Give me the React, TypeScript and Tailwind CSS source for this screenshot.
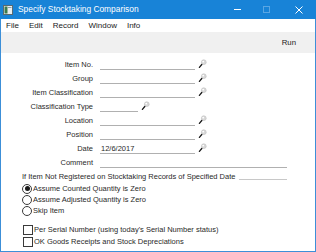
import React from 'react';

const font = { fontFamily: '"Liberation Sans", Arial, sans-serif' };

const Lookup: React.FC = () => (
  <svg width="9" height="10" viewBox="0 0 9 10" className="ml-[3px] -mt-[3px] shrink-0">
    <circle cx="5.8" cy="3.2" r="2.4" fill="#d8d8d8" stroke="#bdbdbd" strokeWidth="0.6" />
    <circle cx="5.2" cy="2.6" r="0.9" fill="#ffffff" />
    <line x1="1.4" y1="8.4" x2="3.8" y2="5.5" stroke="#1a1a1a" strokeWidth="1.3" strokeLinecap="round" />
  </svg>
);

interface RowProps {
  label: string;
  width: number;
  value?: string;
  lookup?: boolean;
}

const fieldWidths: Record<number, string> = {
  95: 'w-[95px]',
  38: 'w-[38px]',
  187: 'w-[187px]',
};

const FormRow: React.FC<RowProps> = ({ label, width, value, lookup }) => (
  <div className="flex h-[14px] items-center">
    <div className="w-[92px] text-right leading-none">{label}</div>
    <div className={`ml-[7px] h-[10px] border-b border-[#b0b0b0] pl-[1px] leading-[9px] ${fieldWidths[width]}`}>
      {value}
    </div>
    {lookup && <Lookup />}
  </div>
);

const Radio: React.FC<{ checked?: boolean; label: string }> = ({ checked, label }) => (
  <div className="flex h-[11px] items-center">
    <div className="flex h-[10px] w-[10px] items-center justify-center rounded-full border border-[#3a3a3a] bg-white">
      {checked && <div className="h-[5px] w-[5px] rounded-full bg-[#1a1a1a]" />}
    </div>
    <span className="ml-[1px] leading-none">{label}</span>
  </div>
);

const Check: React.FC<{ label: string }> = ({ label }) => (
  <div className="flex h-[12px] items-center pl-[1px]">
    <div className="h-[10px] w-[10px] border border-[#3a3a3a] bg-white" />
    <span className="ml-[1px] leading-none">{label}</span>
  </div>
);

export default function App() {
  return (
    <div className="flex h-[252px] w-[316px] flex-col overflow-hidden bg-white text-[7.5px] text-[#2a2a2a]" style={font}>
      {/* title bar */}
      <div className="flex h-[19px] shrink-0 items-center bg-[#1883d7] text-white">
        <svg width="10" height="10" viewBox="0 0 10 10" className="ml-[3px]">
          <rect x="0.5" y="0.5" width="9" height="9" fill="#e8eef0" stroke="#5a6a70" strokeWidth="1" />
          <rect x="1.5" y="1.5" width="3" height="7" fill="#3d7a4a" />
          <rect x="5" y="2" width="3.5" height="1" fill="#8aa0a8" />
        </svg>
        <span className="ml-[5px] text-[8.4px]">Specify Stocktaking Comparison</span>
        <div className="ml-auto flex items-center">
          <div className="mr-[22px] h-px w-[7px] bg-white" />
          <div className="mr-[25px] h-[7px] w-[7px] border border-[#5aa6e4]" />
          <svg width="8" height="8" viewBox="0 0 8 8" className="mr-[13px]">
            <path d="M0.5 0.5 L7.5 7.5 M7.5 0.5 L0.5 7.5" stroke="white" strokeWidth="1" />
          </svg>
        </div>
      </div>

      <div className="flex flex-1 flex-col border-x border-b border-[#3c8fd8]">
        {/* menu bar */}
        <div className="flex h-[13px] shrink-0 items-center gap-[10px] pl-[5px] text-[8px] text-[#1a1a1a]">
          <span>File</span>
          <span>Edit</span>
          <span>Record</span>
          <span>Window</span>
          <span>Info</span>
        </div>

        {/* toolbar */}
        <div className="flex h-[21px] shrink-0 items-center justify-end bg-[#f0f0f0] pr-[19px] text-[7.8px] text-[#1a1a1a]">
          Run
        </div>

        {/* form */}
        <div className="flex flex-col pt-[5px]">
          <FormRow label="Item No." width={95} lookup />
          <FormRow label="Group" width={95} lookup />
          <FormRow label="Item Classification" width={95} lookup />
          <FormRow label="Classification Type" width={38} lookup />
          <FormRow label="Location" width={95} lookup />
          <FormRow label="Position" width={95} lookup />
          <FormRow label="Date" width={95} value="12/6/2017" lookup />
          <FormRow label="Comment" width={187} />
        </div>

        <div className="flex flex-col pl-[21px] pr-[28px]">
          <div className="mt-[1px] flex h-[12px] items-center">
            <span className="leading-none">If Item Not Registered on Stocktaking Records of Specified Date</span>
            <div className="ml-[4px] mt-[5px] h-px flex-1 bg-[#c8c8c8]" />
          </div>
          <Radio checked label="Assume Counted Quantity is Zero" />
          <Radio label="Assume Adjusted Quantity is Zero" />
          <Radio label="Skip Item" />
          <div className="mt-[8px] flex flex-col">
            <Check label="Per Serial Number (using today's Serial Number status)" />
            <Check label="OK Goods Receipts and Stock Depreciations" />
          </div>
        </div>
      </div>
    </div>
  );
}
